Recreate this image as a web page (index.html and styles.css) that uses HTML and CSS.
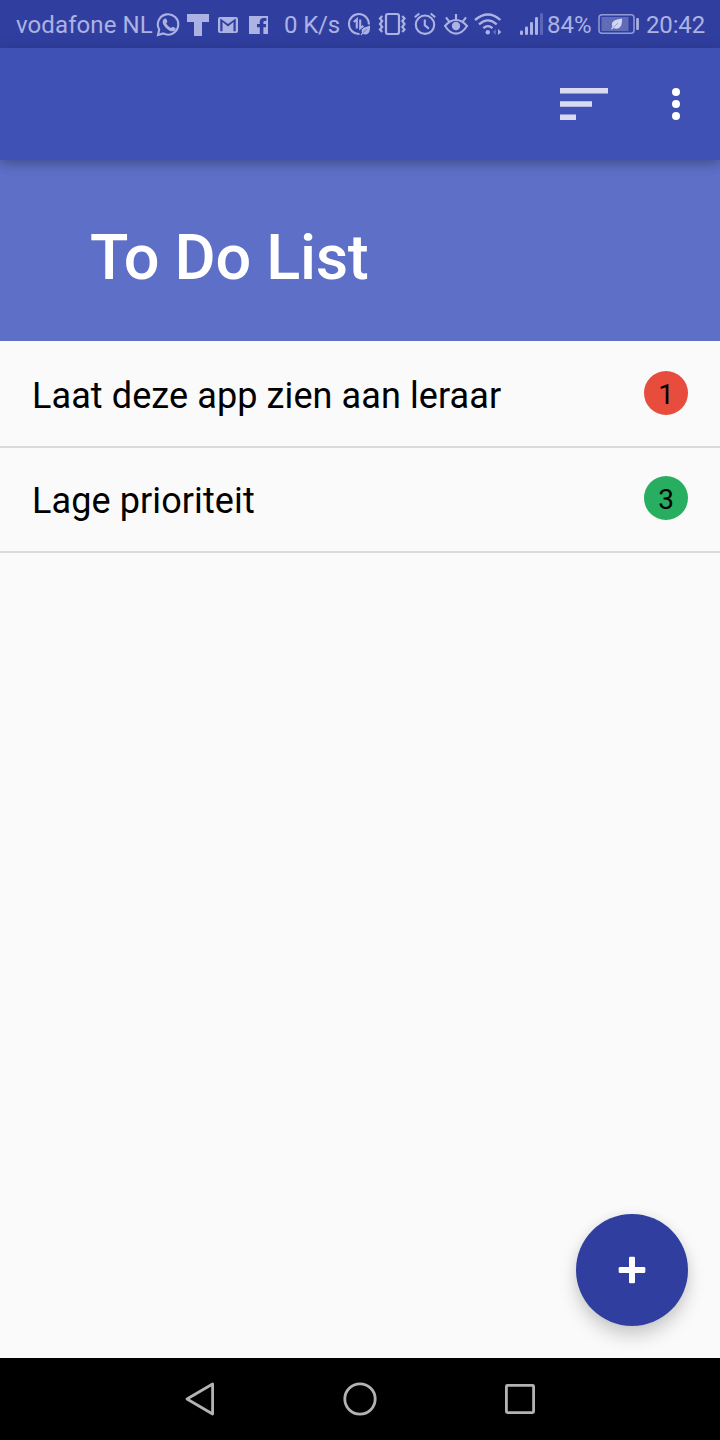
FILE: index.html
```html
<!DOCTYPE html>
<html lang="nl">
<head>
<meta charset="utf-8">
<title>To Do List</title>
<link rel="stylesheet" href="styles.css">
</head>
<body>
<div class="screen">
  <div class="status">
    <span class="carrier">vodafone NL</span>
    <svg width="25" height="48" viewBox="0 0 25 48"><path d="M3.2 29.5A10.2 10.2 0 1 1 7.2 33.4L2 35Z" fill="none" stroke="currentColor" stroke-width="2.1"/><path d="M8.2 18.8L10.1 18.6L11.4 21.8L10.2 23.5Q11.8 26.7 15 28.1L16.6 26.7L19.5 28V30Q17 32.4 13.3 30.4Q9.3 28.2 7.3 24.5Q5.6 21.2 8.2 18.8Z" fill="currentColor"/></svg>
    <svg width="25" height="48" viewBox="0 0 25 48"><path d="M0 14H22V22H15V36H7V22H0Z" fill="currentColor"/></svg>
    <svg width="25" height="48" viewBox="0 0 25 48"><path d="M2 17H18Q20 17 20 19V31Q20 33 18 33H2Q0 33 0 31V19Q0 17 2 17ZM2.3 18.4V31.2H4.5V22L10 26.6L15.5 22V31.2H17.7V18.4L10 24Z" fill="currentColor" fill-rule="evenodd"/></svg>
    <svg width="25" height="48" viewBox="0 0 25 48"><path d="M0 16H19V34H14.4V27.2H17V24H14.4V22.2Q14.4 21 15.7 21H17.4V18H14.6Q10.8 18 10.8 21.8V24H8V27.2H10.8V34H0Z" fill="currentColor"/></svg>
    <span class="speed">0 K/s</span>
    <svg width="25" height="48" viewBox="0 0 25 48"><g fill="none" stroke="currentColor" stroke-width="2.1"><path d="M11.5 34A10 10 0 1 1 20.9 24.5"/><path d="M5.8 22L8.8 19.4V28.5M12.2 19.5V28.3L15.4 25.7"/></g><path d="M22 25.5Q22.4 32 19.8 33.7Q17.5 35.2 14.8 33.8L13.3 35.4L12.6 34.4L14 32.7Q12.7 29 16.2 27.5Q18.5 27.2 22 25.5Z" fill="currentColor"/><path d="M15 32.6L19 29" stroke="#303f9f" stroke-width=".5"/></svg>
    <svg width="30" height="48" viewBox="0 0 30 48"><g fill="none" stroke="currentColor"><rect x="8" y="14" width="13" height="20" rx="2" stroke-width="2.2"/><path d="M4.2 16L2 18.5L4.2 21L2 24L4.2 27L2 29.5L4.2 32M24.3 16L26.5 18.5L24.3 21L26.5 24L24.3 27L26.5 29.5L24.3 32" stroke-width="2.2"/></g></svg>
    <svg width="25" height="48" viewBox="0 0 25 48"><g fill="none" stroke="currentColor" stroke-width="2.1"><circle cx="11" cy="24.7" r="9.2"/><path d="M.8 17.2L5.3 13.5M16.7 13.5L21.2 17.2M10.8 19.5V25.2L14.8 28.6"/></g></svg>
    <svg width="25" height="48" viewBox="0 0 25 48"><path d="M1 26Q6 20 12 20Q18 20 23 26Q18 33.6 12 33.6Q6 33.6 1 26ZM12 20V14M5.2 21.6L2 17.3M18.8 21.6L22 17.3" fill="none" stroke="currentColor" stroke-width="2.1"/><circle cx="12" cy="26" r="4.2" fill="currentColor"/></svg>
    <svg width="30" height="48" viewBox="0 0 30 48"><g fill="none" stroke="currentColor" stroke-width="2.3"><path d="M1 20Q14 9 26.4 20M5 24.3Q14 16.5 22.7 24.3M9.3 28.2Q14 24 18.5 28.2"/></g><circle cx="13.8" cy="32.2" r="2.2" fill="currentColor"/><path d="M21.8 29V35L18.8 32Z" fill="currentColor" opacity=".4"/><path d="M24 29V35L27.3 32Z" fill="currentColor"/></svg>
    <svg width="25" height="48" viewBox="0 0 25 48"><g fill="currentColor"><rect y="30.5" width="3" height="4.5" rx="1.3"/><rect x="5" y="26.5" width="3" height="8.5" rx="1.3"/><rect x="10" y="22" width="3" height="13" rx="1.3"/><rect x="15" y="17" width="3" height="18" rx="1.3"/><rect x="20" y="13" width="3" height="22" rx="1.3" opacity=".35"/></g></svg>
    <span class="percent">84%</span>
    <svg width="42" height="48" viewBox="0 0 42 48"><rect x="1" y="14.8" width="35" height="18.4" rx="3" fill="none" stroke="currentColor" stroke-width="1.5" opacity=".8"/><rect x="3.5" y="17" width="27" height="14" fill="currentColor" opacity=".4"/><rect x="38.2" y="18" width="2.7" height="12" rx="1" fill="currentColor"/><path d="M24 18.6Q24.5 26.5 20.5 28.3Q18 29.4 15.5 28L13.8 29.6L13 28.8L14.4 27Q12.6 22.5 17 20.3Q19.5 19.3 24 18.6Z" fill="#d0d5f2"/><path d="M15.4 27.4L19.8 23.2" stroke="#596ab9" stroke-width=".5"/></svg>
    <span class="clock">20:42</span>
  </div>
  <header class="toolbar">
    <svg class="sort" width="48" height="34" viewBox="0 0 48 34"><path d="M0 0H48V5.5H0ZM0 13.3H32V18.7H0ZM0 26.5H16V32H0Z" fill="#d9dcf0"/></svg>
    <svg width="8" height="32" viewBox="0 0 8 32"><g fill="#fff"><circle cx="4" cy="4" r="4"/><circle cx="4" cy="16" r="4"/><circle cx="4" cy="28" r="4"/></g></svg>
  </header>
  <div class="banner"><h1 class="title">To Do List</h1></div>
  <main class="content">
    <div class="item"><span class="task">Laat deze app zien aan leraar</span><span class="badge high">1</span></div>
    <div class="item"><span class="task">Lage prioriteit</span><span class="badge low">3</span></div>
    <button class="fab" aria-label="Toevoegen"><svg width="28" height="28" viewBox="0 0 28 28"><g fill="#fff"><rect x=".7" y="11" width="26.6" height="6" rx="1.3"/><rect x="11" y=".7" width="6" height="26.6" rx="1.3"/></g></svg></button>
  </main>
  <nav class="navbar">
    <svg width="34" height="36" viewBox="0 0 34 36"><path d="M4 18L29.6 3V33Z"/></svg>
    <svg width="34" height="36" viewBox="0 0 34 36"><circle cx="17" cy="18" r="15.2"/></svg>
    <svg width="34" height="36" viewBox="0 0 34 36"><rect x="3.4" y="4.4" width="27.2" height="27.2" rx="1"/></svg>
  </nav>
</div>
</body>
</html>
```
FILE: styles.css
```css
* { box-sizing: border-box; }
body { margin: 0; font-family: Roboto, "Liberation Sans", sans-serif; }
svg { display: block; flex: none; }
.screen { display: flex; flex-direction: column; width: 720px; height: 1440px; background: #fafafa; }
.status {
  display: grid;
  grid-template-columns: 140px 31px 31px 31px 35px 64px 30px 36px 30px 30px 46px 27px 51px 48px 60px;
  height: 48px;
  padding-left: 16px;
  background: #303f9f;
  color: #acb2e2;
  font-size: 24px;
  line-height: 51px;
  white-space: nowrap;
}
.carrier { letter-spacing: .1px; }
.speed, .clock { letter-spacing: -.15px; }
.toolbar {
  position: relative;
  z-index: 1;
  display: flex;
  align-items: center;
  justify-content: flex-end;
  gap: 64px;
  height: 112px;
  padding-right: 40px;
  background: #3f51b5;
  box-shadow: 0 4px 10px rgba(0, 0, 0, .22), 0 2px 16px rgba(0, 0, 0, .08);
}
.sort { margin-top: 2px; }
.banner { height: 181px; padding: 60px 0 0 90px; background: #5e6fc7; }
.title { margin: 0; color: #fff; font-size: 63px; font-weight: 500; letter-spacing: -.3px; line-height: 76px; white-space: nowrap; }
.content { position: relative; flex: 1; }
.item {
  display: flex;
  justify-content: space-between;
  height: 107px;
  padding: 30px 32px 0;
  border-bottom: 2px solid #dadada;
  color: #000;
}
.item + .item { height: 105px; padding-top: 28px; }
.task { font-size: 36px; letter-spacing: .1px; line-height: 50px; }
.badge { width: 44px; height: 44px; border-radius: 50%; font-size: 28px; line-height: 47px; text-align: center; }
.high { background: #e74c3c; }
.low { background: #27ae60; }
.fab {
  position: absolute;
  right: 32px;
  bottom: 32px;
  display: grid;
  place-items: center;
  width: 112px;
  height: 112px;
  padding: 0;
  border: 0;
  border-radius: 50%;
  background: #303f9f;
  box-shadow: 0 10px 18px rgba(0, 0, 0, .18), 0 0 12px rgba(0, 0, 0, .06);
}
.navbar {
  position: relative;
  display: flex;
  align-items: center;
  justify-content: center;
  gap: 126px;
  height: 82px;
  background: #000;
}
.navbar path, .navbar circle, .navbar rect { fill: none; stroke: #b3b3b3; stroke-width: 2.8; stroke-linejoin: round; }
```
